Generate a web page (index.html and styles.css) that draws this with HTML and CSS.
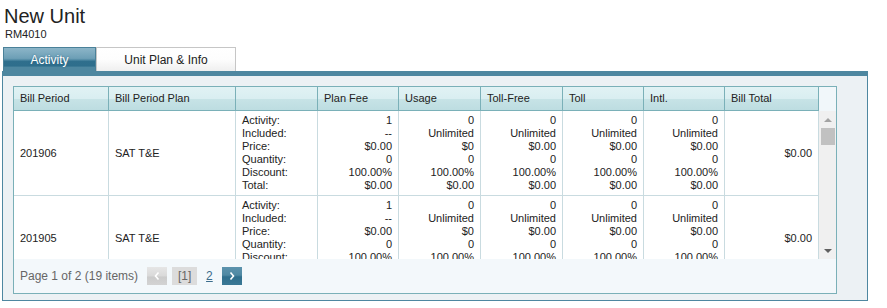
FILE: index.html
```html
<!DOCTYPE html>
<html lang="en">
<head>
  <meta charset="UTF-8">
  <meta name="viewport" content="width=device-width, initial-scale=1.0">
  <title>New Unit</title>
  <link rel="stylesheet" href="styles.css">
</head>
<body>
  <h1 class="title">New Unit</h1>
  <div class="unit-code">RM4010</div>

  <div class="tabs">
    <div class="tab active">Activity</div>
    <div class="tab">Unit Plan &amp; Info</div>
  </div>

  <div class="panel">
    <div class="grid">
      <div class="grid-header">
        <div class="row head">
          <div class="cell">Bill Period</div>
          <div class="cell">Bill Period Plan</div>
          <div class="cell"></div>
          <div class="cell">Plan Fee</div>
          <div class="cell">Usage</div>
          <div class="cell">Toll-Free</div>
          <div class="cell">Toll</div>
          <div class="cell">Intl.</div>
          <div class="cell">Bill Total</div>
        </div>
        <div class="scroll-head"></div>
      </div>

      <div class="grid-body">
        <div class="rows" id="rows"></div>
        <div class="scrollbar">
          <div class="scroll-btn"><span class="arrow up"></span></div>
          <div class="thumb"></div>
          <div class="track"></div>
          <div class="scroll-btn"><span class="arrow down"></span></div>
        </div>
      </div>

      <div class="pager">
        <span class="pager-info">Page 1 of 2 (19 items)</span>
        <span class="page-btn disabled">
          <svg width="8" height="10" viewBox="0 0 8 10"><polyline points="5.5,1.5 2.5,5 5.5,8.5" fill="none" stroke="#fff" stroke-width="1.6"/></svg>
        </span>
        <span class="page-current">[1]</span>
        <a class="page-link" href="#">2</a>
        <span class="page-btn">
          <svg width="8" height="10" viewBox="0 0 8 10"><polyline points="2.5,1.5 5.5,5 2.5,8.5" fill="none" stroke="#fff" stroke-width="1.6"/></svg>
        </span>
      </div>
    </div>
  </div>

  <script>
    const labels = ["Activity:", "Included:", "Price:", "Quantity:", "Discount:", "Total:"];
    const planFee = ["1", "--", "$0.00", "0", "100.00%", "$0.00"];
    const usage = ["0", "Unlimited", "$0", "0", "100.00%", "$0.00"];
    const calls = ["0", "Unlimited", "$0.00", "0", "100.00%", "$0.00"];

    const periods = ["201906", "201905", "201904", "201903", "201902",
                     "201901", "201812", "201811", "201810", "201809"];

    const bills = periods.map(p => ({
      period: p,
      plan: "SAT T&E",
      columns: [planFee, usage, calls, calls, calls],
      total: "$0.00"
    }));

    function makeCell(className, lines) {
      const div = document.createElement("div");
      div.className = "cell " + className;
      if (Array.isArray(lines)) {
        lines.forEach(text => {
          const line = document.createElement("div");
          line.textContent = text;
          div.appendChild(line);
        });
      } else {
        div.textContent = lines;
      }
      return div;
    }

    function renderBills() {
      const list = document.getElementById("rows");
      list.innerHTML = "";
      bills.forEach(bill => {
        const row = document.createElement("div");
        row.className = "row item";
        row.appendChild(makeCell("middle", bill.period));
        row.appendChild(makeCell("middle", bill.plan));
        row.appendChild(makeCell("", labels));
        bill.columns.forEach(col => row.appendChild(makeCell("num", col)));
        row.appendChild(makeCell("middle num", bill.total));
        list.appendChild(row);
      });
    }

    renderBills();
  </script>
</body>
</html>
```

FILE: styles.css
```css
body {
  margin: 0;
  padding: 0;
  font-family: "Liberation Sans", Arial, sans-serif;
  background-color: #ffffff;
  color: #222;
}
.title {
  font-size: 20px;
  font-weight: normal;
  line-height: 24px;
  margin: 4px 0 0 4px;
}
.unit-code {
  font-size: 11px;
  line-height: 13px;
  margin-left: 5px;
}
.tabs {
  display: flex;
  margin: 6px 0 0 3px;
  height: 24px;
}
.tab {
  box-sizing: border-box;
  width: 140px;
  height: 24px;
  display: flex;
  align-items: center;
  justify-content: center;
  font-size: 12px;
  border: 1px solid #c6c6c6;
  border-bottom: none;
  background: linear-gradient(#ffffff, #fdfdfd 50%, #efefef);
}
.tab.active {
  width: 93px;
  color: #fff;
  border-color: #4a8199;
  background: linear-gradient(#8cb5c8, #6d9fb6 45%, #4f89a3 52%, #2f6f8d 58%, #2e6e8c 78%, #4e87a0 84%, #4e87a0);
  text-shadow: 0 0 2px #2c6580;
}
.panel {
  box-sizing: border-box;
  width: 866px;
  margin-left: 2px;
  border: 1px solid #4e87a0;
  border-top: 5px solid #4e87a0;
  background: #ecf1f4;
  padding: 10px 0 6px 10px;
}
.grid {
  box-sizing: border-box;
  width: 824px;
  border: 1px solid #7ab0b8;
}
.grid-header {
  display: flex;
}
.row {
  display: grid;
  grid-template-columns: 95px 127px 82px 81px 82px 82px 81px 81px 94px;
}
.cell {
  box-sizing: border-box;
  font-size: 11px;
  line-height: 13px;
}
.head .cell {
  height: 24px;
  display: flex;
  align-items: center;
  padding-left: 6px;
  border-right: 1px solid #7ab0b8;
  border-bottom: 1px solid #7ab0b8;
  background: linear-gradient(#e1f2f4, #d9eef1 50%, #c7e3e6 52%, #bddde1);
}
.scroll-head {
  width: 17px;
  height: 24px;
  background: #f1f7fa;
}
.grid-body {
  display: flex;
  height: 148px;
}
.rows {
  width: 805px;
  overflow: hidden;
  background: #fff;
}
.item .cell {
  padding: 3px 6px;
  border-right: 1px solid #c9dbe0;
  border-bottom: 1px solid #c9dbe0;
}
.item .num {
  text-align: right;
}
.item .middle {
  display: flex;
  align-items: center;
}
.item .middle.num {
  justify-content: flex-end;
}
.scrollbar {
  width: 17px;
  background: #f0f0f0;
  display: flex;
  flex-direction: column;
}
.scroll-btn {
  height: 17px;
  display: flex;
  align-items: center;
  justify-content: center;
}
.arrow {
  width: 0;
  height: 0;
  border-left: 4px solid transparent;
  border-right: 4px solid transparent;
}
.arrow.up {
  border-bottom: 4px solid #a3a3a3;
}
.arrow.down {
  border-top: 4px solid #606060;
}
.thumb {
  height: 17px;
  margin: 0 1px 0 2px;
  background: #c1c1c1;
}
.track {
  flex-grow: 1;
}
.pager {
  height: 34px;
  display: flex;
  align-items: center;
  gap: 5px;
  padding-left: 6px;
  background: #f3f8fb;
  font-size: 12px;
  color: #666;
}
.pager-info {
  margin-right: 4px;
}
.page-btn {
  box-sizing: border-box;
  width: 20px;
  height: 18px;
  display: flex;
  align-items: center;
  justify-content: center;
  background: linear-gradient(#5c93ad, #4f89a3 45%, #2f6f8d 55%, #3a7895);
}
.page-btn.disabled {
  background: linear-gradient(#e6e6e6, #d9d9d9 50%, #cbcbcb 55%, #d3d3d3);
}
.page-current {
  width: 25px;
  height: 18px;
  line-height: 18px;
  text-align: center;
  background: #dcdcdc;
}
.page-link {
  padding: 0 4px;
  color: #3b6c8c;
}
```
